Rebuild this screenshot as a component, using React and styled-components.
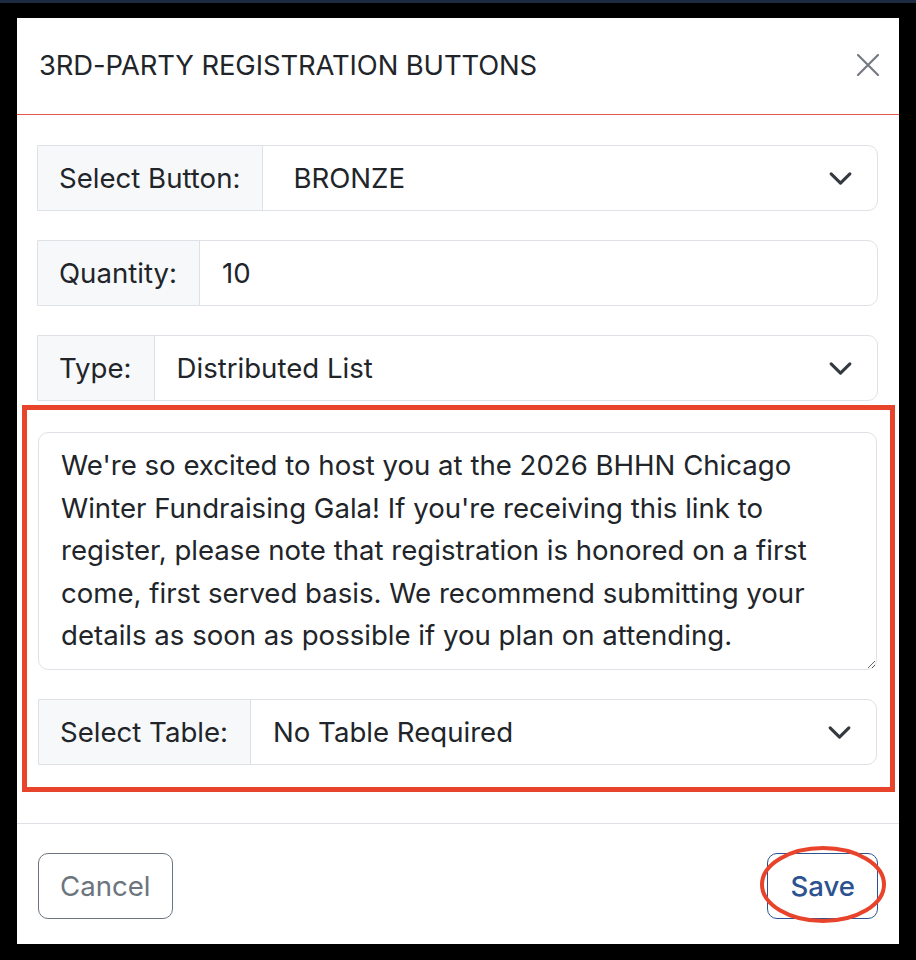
import React from "react";
import styled, { createGlobalStyle } from "styled-components";

const Global = createGlobalStyle`
  html, body { margin: 0; padding: 0; background: #000; }
  * { box-sizing: border-box; }
`;

const FONT = `Inter, "Liberation Sans", Arial, sans-serif`;

const Page = styled.div`
  min-height: 960px;
  border-top: 3px solid #1c2a42;
  padding: 15px 17px 16px 17px;
  font-family: ${FONT};
  color: #212529;
`;

const Modal = styled.div`
  width: 882px;
  height: 926px;
  background: #fff;
  display: flex;
  flex-direction: column;
`;

const Header = styled.div`
  height: 97px;
  border-bottom: 1px solid #e4574a;
  display: flex;
  align-items: center;
  justify-content: space-between;
  padding: 0 20px 2px 22px;
`;

const Title = styled.h5`
  margin: 0;
  font-size: 27.4px;
  font-weight: 400;
  line-height: 42px;
  letter-spacing: -0.1px;
  color: #212529;
`;

const CloseBtn = styled.button`
  width: 22px;
  height: 22px;
  padding: 0;
  border: 0;
  background: none;
  display: flex;
  color: #747b82;
`;

const Body = styled.div`
  flex: 1;
  padding: 30px 21px 30px 20px;
  display: flex;
  flex-direction: column;
`;

const Group = styled.div`
  display: flex;
  height: 66px;
  border: 1px solid #dee2e6;
  border-radius: 0 10px 10px 0;
  margin-top: ${(p) => p.$mt || 0}px;
  font-size: 27.6px;
  line-height: 42.5px;
`;

const Addon = styled.div`
  display: flex;
  align-items: center;
  padding: 0 22px 0 21px;
  background: #f7f8fa;
  border-right: 1px solid #dee2e6;
  white-space: nowrap;
`;

const Field = styled.div`
  flex: 1;
  display: flex;
  align-items: center;
  justify-content: space-between;
  padding: 0 24px 0 ${(p) => p.$pl || 22}px;
  border-radius: 0 10px 10px 0;
`;

const Highlight = styled.div`
  margin: 4px -17px 0 -15px;
  border: 5px solid #e8432b;
  padding: 22px 13px 22px 11px;
  display: flex;
  flex-direction: column;
  gap: 29px;
`;

const TextArea = styled.textarea`
  display: block;
  width: 100%;
  height: 238px;
  border: 1px solid #dee2e6;
  border-radius: 10px;
  padding: 11px 22px;
  font-family: ${FONT};
  font-size: 27.6px;
  line-height: 42.5px;
  color: #212529;
  resize: vertical;
  outline: none;
`;

const Footer = styled.div`
  border-top: 1px solid #dee2e6;
  padding: 29px 21px 25px 21px;
  display: flex;
  justify-content: space-between;
  align-items: center;
`;

const Btn = styled.button`
  height: 66px;
  padding: 0 ${(p) => p.$px || 22}px;
  background: #fff;
  border: 1px solid ${(p) => p.$color};
  color: ${(p) => p.$color};
  border-radius: 10px;
  font-family: ${FONT};
  font-size: 27.6px;
  font-weight: ${(p) => p.$weight || 400};
  line-height: 42.5px;
`;

const Marked = styled.div`
  position: relative;
  display: flex;
`;

const Ellipse = styled.svg`
  position: absolute;
  left: -7px;
  top: -7px;
  width: 126px;
  height: 77px;
  pointer-events: none;
  overflow: visible;
`;

const Chevron = () => (
  <svg width="25" height="25" viewBox="0 0 16 16" fill="none">
    <path d="m2 5 6 6 6-6" stroke="#343a40" strokeWidth="2" strokeLinecap="round" strokeLinejoin="round" />
  </svg>
);

const text =
  "We're so excited to host you at the 2026 BHHN Chicago Winter Fundraising Gala! If you're receiving this link to register, please note that registration is honored on a first come, first served basis. We recommend submitting your details as soon as possible if you plan on attending.";

export default function App() {
  return (
    <>
      <Global />
      <Page>
        <Modal>
          <Header>
            <Title>3RD-PARTY REGISTRATION BUTTONS</Title>
            <CloseBtn aria-label="Close">
              <svg width="22" height="22" viewBox="0 0 22 22">
                <path d="M1 1 21 21M21 1 1 21" stroke="currentColor" strokeWidth="2.2" strokeLinecap="round" />
              </svg>
            </CloseBtn>
          </Header>
          <Body>
            <Group>
              <Addon>Select Button:</Addon>
              <Field $pl={30}>
                <span>BRONZE</span>
                <Chevron />
              </Field>
            </Group>
            <Group $mt={29}>
              <Addon>Quantity:</Addon>
              <Field>
                <span>10</span>
              </Field>
            </Group>
            <Group $mt={29}>
              <Addon>Type:</Addon>
              <Field>
                <span>Distributed List</span>
                <Chevron />
              </Field>
            </Group>
            <Highlight>
              <TextArea defaultValue={text} />
              <Group>
                <Addon>Select Table:</Addon>
                <Field>
                  <span>No Table Required</span>
                  <Chevron />
                </Field>
              </Group>
            </Highlight>
          </Body>
          <Footer>
            <Btn $color="#6c757d" $px={21}>Cancel</Btn>
            <Marked>
              <Btn $color="#2c528f" $weight={500}>Save</Btn>
              <Ellipse viewBox="0 0 126 77">
                <ellipse cx="63" cy="38.5" rx="61" ry="36.5" fill="none" stroke="#e8432b" strokeWidth="4" />
              </Ellipse>
            </Marked>
          </Footer>
        </Modal>
      </Page>
    </>
  );
}
